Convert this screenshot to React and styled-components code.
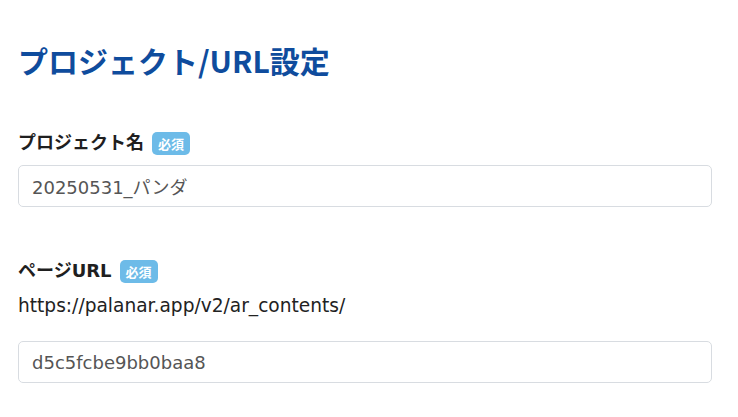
import React from "react"
import styled, { createGlobalStyle } from "styled-components"

const GlobalStyle = createGlobalStyle`
  body {
    margin: 0;
    background: #ffffff;
    font-family: "DejaVu Sans", "Noto Sans CJK JP", sans-serif;
    color: #222;
  }
`

const Page = styled.div`
  padding: 42px 26px 0 18px;
`

const Title = styled.h1`
  margin: 0 0 52px;
  font-size: 30px;
  line-height: 36px;
  font-weight: 700;
  color: #0f4c9d;
  font-family: "Noto Sans CJK JP", sans-serif;
`

const Field = styled.div`
  display: flex;
  flex-direction: column;
  margin-bottom: ${(p) => p.gap || 0}px;
`

const LabelRow = styled.div`
  display: flex;
  align-items: center;
  gap: 8px;
  height: 26px;
  margin-bottom: 9px;
`

const Label = styled.label`
  font-size: 18px;
  line-height: 26px;
  font-weight: 700;
  color: #1f1f1f;
`

const Badge = styled.span`
  display: inline-flex;
  align-items: center;
  justify-content: center;
  height: 23px;
  padding: 0 6px;
  border-radius: 5px;
  background: #6dbbe8;
  color: #fff;
  font-size: 13px;
  font-weight: 700;
  font-family: "Noto Sans CJK JP", sans-serif;
`

const Prefix = styled.div`
  font-size: 18.6px;
  line-height: 26px;
  color: #222;
  margin-bottom: 22px;
`

const Input = styled.input`
  box-sizing: border-box;
  width: 100%;
  height: 42px;
  padding: 0 13px;
  border: 1px solid #d8dce1;
  border-radius: 5px;
  font-size: 18px;
  font-family: "DejaVu Sans", "Noto Sans CJK JP", sans-serif;
  color: #555;
  background: #fff;
  outline: none;
`

export default function App() {
  return (
    <>
      <GlobalStyle />
      <Page>
        <Title>プロジェクト/URL設定</Title>
        <Field gap={51}>
          <LabelRow>
            <Label>プロジェクト名</Label>
            <Badge>必須</Badge>
          </LabelRow>
          <Input defaultValue="20250531_パンダ" />
        </Field>
        <Field>
          <LabelRow>
            <Label>ページURL</Label>
            <Badge>必須</Badge>
          </LabelRow>
          <Prefix>https://palanar.app/v2/ar_contents/</Prefix>
          <Input defaultValue="d5c5fcbe9bb0baa8" />
        </Field>
      </Page>
    </>
  )
}
